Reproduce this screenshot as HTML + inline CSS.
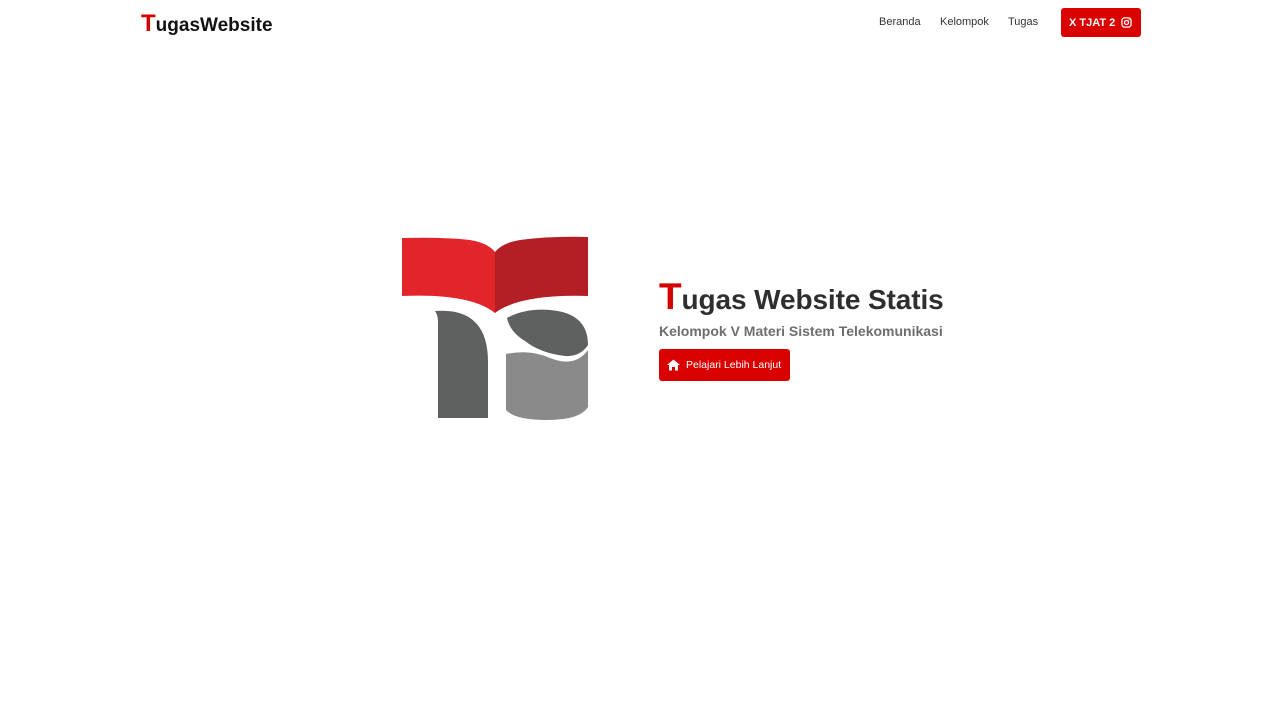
<!DOCTYPE html>
<html><head><meta charset="utf-8"><style>
*{margin:0;padding:0;box-sizing:border-box}
body{width:1280px;height:720px;background:#fff;font-family:"Liberation Sans",Arial,sans-serif;position:relative;overflow:hidden}
.brand{position:absolute;left:141px;top:10px;font-size:19px;font-weight:bold;color:#111}
.brand span{color:#d50000;font-size:24px}
.nav{position:absolute;top:16px;font-size:11px;color:#333}
.btn{position:absolute;background:#d90000;color:#fff;border-radius:3px;display:flex;align-items:center}
h1{position:absolute;left:659px;top:276px;font-size:28px;font-weight:bold;color:#2e2e2e;white-space:nowrap;letter-spacing:-0.1px}
h1 span{color:#d50000;font-size:37px}
.sub{position:absolute;left:659px;top:323px;font-size:14px;font-weight:bold;color:#6e6e6e}
</style></head><body>
<div class="brand"><span>T</span>ugasWebsite</div>
<div class="nav" style="left:879px">Beranda</div>
<div class="nav" style="left:940px">Kelompok</div>
<div class="nav" style="left:1008px">Tugas</div>
<div class="btn" style="left:1061px;top:8px;width:80px;height:29px;font-size:11px;font-weight:bold;padding-left:8px">X TJAT 2
<svg width="11" height="11" viewBox="0 0 12 12" style="margin-left:6px"><rect x="1" y="1" width="10" height="10" rx="3" fill="none" stroke="#fff" stroke-width="1.4"/><circle cx="6" cy="6" r="2.2" fill="none" stroke="#fff" stroke-width="1.4"/><circle cx="8.8" cy="3.2" r=".7" fill="#fff"/></svg></div>
<svg style="position:absolute;left:0;top:0" width="1280" height="720">
<path d="M402,238 Q445,237 470,240 Q488,243 495,252 L495,313 Q470,293 402,296 Z" fill="#e2242b"/>
<path d="M495,252 Q502,243 520,240 Q550,236 588,237 L588,296 Q520,294 495,313 Z" fill="#b41f25"/>
<path d="M435,311 Q488,307 488,362 L488,418 L438,418 L438,322 Q438,315 435,311 Z" fill="#5f6060"/>
<path d="M507,318 Q525,308 550,310 Q588,313 588,345 Q580,357 565,356 Q540,353 525,341 Q510,332 507,318 Z" fill="#5f6060"/>
<path d="M506,354 Q530,349 550,358 Q575,368 588,350 L588,407 Q580,420 547,420 Q515,420 506,410 Z" fill="#8a8a8a"/>
</svg>
<h1><span>T</span>ugas Website Statis</h1>
<div class="sub">Kelompok V Materi Sistem Telekomunikasi</div>
<div class="btn" style="left:659px;top:349px;width:131px;height:32px;font-size:10.5px;padding-left:8px">
<svg width="13" height="12" viewBox="0 0 13 12" style="margin-right:6px"><path d="M6.5,0.5 L13,6 L11,6 L11,11.5 L8,11.5 L8,8 L5,8 L5,11.5 L2,11.5 L2,6 L0,6 Z" fill="#fff"/></svg>Pelajari Lebih Lanjut</div>
</body></html>
